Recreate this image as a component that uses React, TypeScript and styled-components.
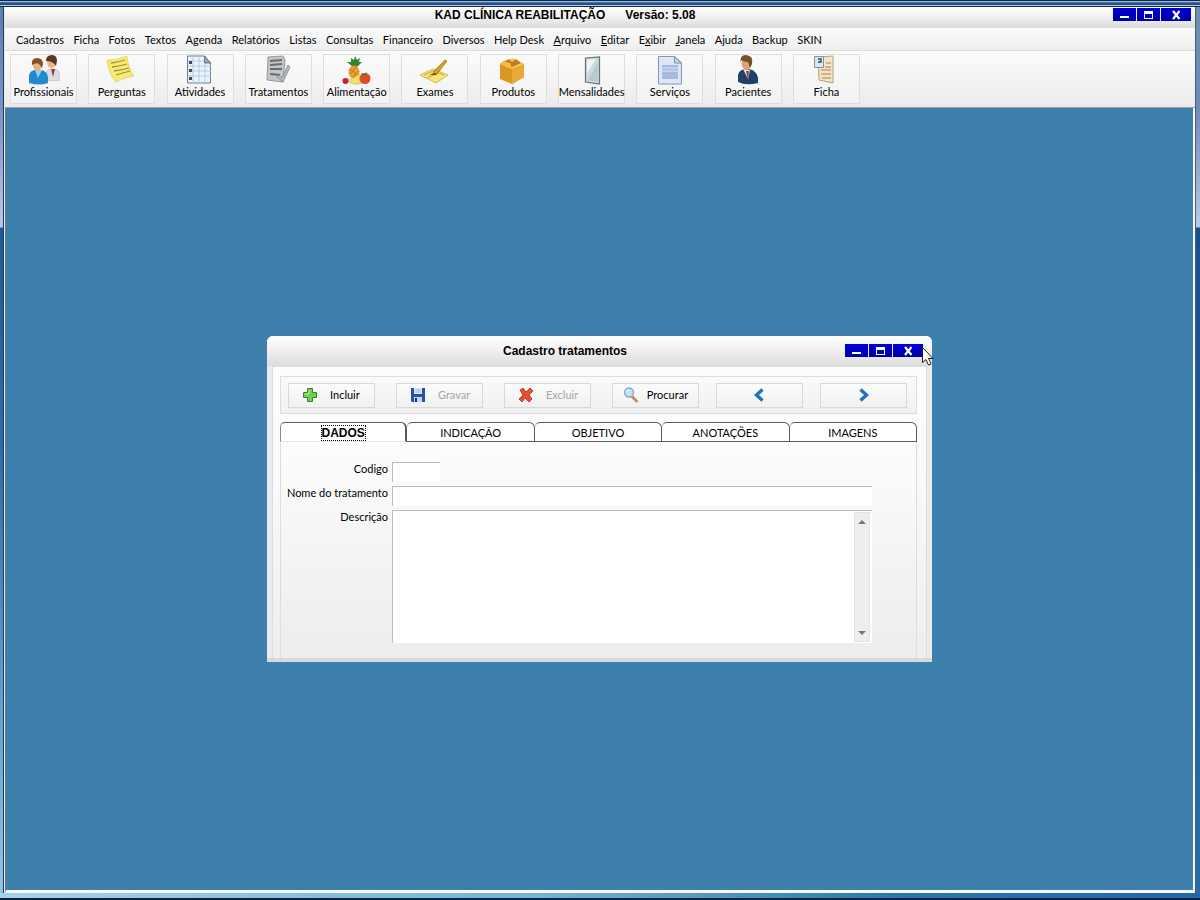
import React from 'react';
import styled, { createGlobalStyle } from 'styled-components';

const Global = createGlobalStyle`
  *, *::before, *::after { box-sizing: border-box; }
  html, body { margin: 0; height: 100%; }
  body, button, input, textarea { font-family: Lato, "Liberation Sans", sans-serif; font-size: 11px; line-height: 14px; color: #000; }
  #root { height: 100%; }
  button { padding: 0; border: 0; background: none; }
`;

const Frame = styled.div`
  display: grid;
  grid-template-columns: 5px minmax(0, 1fr) 5px;
  grid-template-rows: 7px minmax(0, 1fr) 7px;
  min-height: 100vh;
  background: #1d5b96;
`;
const EdgeTop = styled.div`
  grid-column: 1 / -1;
  background: linear-gradient(#0f2c56 0 1px, #9db7d2 1px 2px, #4a73a6 2px 3px, #224f88 3px 5px, #b5cde2 5px 6px, #10264a 6px);
`;
const EdgeBottom = styled.div`
  grid-column: 1 / -1;
  background: linear-gradient(transparent 0 5px, #0b2140 5px), linear-gradient(90deg, #a5d0ea 0, #6fb4da 45%, #2f75ad 75%, #2467a5);
`;
const EdgeLeft = styled.div`
  border-right: 1px solid #e4edf4;
  box-shadow: inset -1px 0 #1c3a62;
  background: linear-gradient(#5d7fae 0, #7f94c4 110px, #b9c8e6 220px, #1f5b94 221px, #2a6ea9 50%, #8fc4e2);
`;
const EdgeRight = styled.div`
  border-left: 1px solid #3c5f86;
  background: linear-gradient(#6f8dae 0, #6d8cb2 90px, #7b8bbd 110px, #b7cbe4 220px, #1a4f8c 221px, #1f5d9b 60%, #2b6ca8);
`;
const AppWindow = styled.div`
  display: flex;
  flex-direction: column;
  min-width: 0;
  background: #f4f4f4;
`;
const TitleBar = styled.header<{ $dialog?: boolean }>`
  display: flex;
  align-items: flex-start;
  flex: none;
  height: ${(p) => (p.$dialog ? 30 : 21)}px;
  padding: ${(p) => (p.$dialog ? '8px 9px 0 18px' : '1px 4px 0 12px')};
  background: linear-gradient(#ffffff, #f1f1f1 45%, #dcdcdc);
`;
const Title = styled.h1`
  flex: 1;
  margin: 0;
  font-family: "Liberation Sans", sans-serif;
  font-size: 12px;
  line-height: 14px;
  font-weight: 700;
  text-align: center;
  white-space: pre;
`;
const Controls = styled.div`
  display: flex;
  gap: 1px;
`;
const ControlButton = styled.button<{ $wide?: boolean }>`
  width: ${(p) => (p.$wide ? 30 : 23)}px;
  height: 13px;
  background: linear-gradient(#0000d8, #0000a8);
  svg { display: block; margin: 0 auto; }
`;
const MenuBar = styled.nav`
  flex: none;
  height: 23px;
  padding: 5px 11px 0;
  border-bottom: 1px solid #dcdcdc;
  background: linear-gradient(#fbfbfb, #eeeeee);
`;
const MenuRow = styled.div`
  display: flex;
  justify-content: space-between;
  max-width: 806px;
`;
const MenuItem = styled.button`
  white-space: nowrap;
`;
const ToolBar = styled.div`
  flex: none;
  height: 57px;
  padding: 3px 5px 0;
  border-bottom: 1px solid #a09ba8;
  background: linear-gradient(#fcfcfc, #ebebeb);
`;
const ToolRow = styled.div`
  display: flex;
  justify-content: space-between;
  max-width: 850px;
`;
const ToolButton = styled.button`
  display: flex;
  flex-direction: column;
  align-items: center;
  width: 67px;
  height: 50px;
  border: 1px solid #dedede;
  background: linear-gradient(#fafafa, #f2f2f2);
  white-space: nowrap;
  svg { flex: none; }
`;
const Workspace = styled.main`
  display: flex;
  flex: 1;
  align-items: center;
  justify-content: center;
  border: solid;
  border-width: 0 2px 3px 1px;
  border-color: #f6fafc #f6fafc #f6fafc #64788c;
  background: #3c80ab;
`;
const Dialog = styled.section`
  position: relative;
  width: 665px;
  border-bottom: 4px solid #d6dad9;
  border-radius: 6px 6px 0 0;
  background: #ececec;
`;
const DialogTitleBar = styled(TitleBar)`
  border-radius: 6px 6px 0 0;
`;
const DialogBody = styled.div`
  margin: 0 5px;
  padding: 9px 9px 0 7px;
  border: 1px solid #dddddd;
  border-bottom: 0;
  background: linear-gradient(#fcfcfc, #f9f9f9 40%, #eeeeee);
`;
const ActionBar = styled.div`
  display: flex;
  align-items: center;
  gap: 21px;
  height: 38px;
  padding: 0 7px;
  border: 1px solid #dddddd;
  background: linear-gradient(#fafafa, #f0f0f0);
`;
const NavPair = styled.div`
  display: flex;
  gap: 17px;
  margin-left: -4px;
`;
const ActionButton = styled.button<{ $layout?: 'snug' | 'icon' }>`
  display: flex;
  align-items: center;
  justify-content: ${(p) => (p.$layout ? 'center' : 'flex-start')};
  gap: ${(p) => (p.$layout ? 8 : 12)}px;
  width: 87px;
  height: 25px;
  padding: ${(p) => (p.$layout ? 0 : '0 0 0 13px')};
  border: 1px solid #d9d9d9;
  background: linear-gradient(#fbfbfb, #f1f1f1);
  svg { flex: none; }
  &:disabled { color: #a5a5a5; }
`;
const TabList = styled.div`
  display: grid;
  grid-template-columns: repeat(5, minmax(0, 1fr));
  margin-top: 8px;
`;
const Tab = styled.button`
  height: 20px;
  padding-top: 1px;
  border: 1px solid #5a5a5a;
  border-left-width: 0;
  border-radius: 5px 6px 0 0;
  background: #fff;
  &:first-child { border-left: 1px solid #8a8a8a; }
  &[aria-selected='true'] {
    border-bottom-color: #e4e4e4;
    border-right-width: 2px;
    font: 700 12px/14px "Liberation Sans", sans-serif;
  }
  &[aria-selected='true'] span { outline: 1px dotted #000; }
`;
const Panel = styled.form`
  display: grid;
  grid-template-columns: 107px minmax(0, 480px);
  gap: 4px;
  padding: 20px 0 15px;
  border: solid #dddddd;
  border-width: 0 1px;
  background: linear-gradient(#fcfcfc, #f3f3f3 60%, #ededed);
`;
const Label = styled.label`
  text-align: right;
  white-space: nowrap;
`;
const Field = styled.input<{ $short?: boolean }>`
  width: ${(p) => (p.$short ? '48px' : '100%')};
  height: 20px;
  padding: 0 3px;
  border: solid #bdbdbd;
  border-width: 1px 0 0 1px;
  border-radius: 0;
  outline: 0;
  background: #fff;
`;
const MemoBox = styled.div`
  display: flex;
  height: 133px;
  padding-right: 2px;
  border: solid #bdbdbd;
  border-width: 1px 0 0 1px;
  background: #fff;
`;
const Memo = styled.textarea`
  flex: 1;
  padding: 2px 3px;
  border: 0;
  outline: 0;
  resize: none;
  background: #fff;
  overflow: hidden;
`;
const Scroll = styled.div`
  display: flex;
  flex-direction: column;
  justify-content: space-between;
  width: 16px;
  margin: 1px 0;
  border: 1px solid #e4e4e4;
  background: #eeeeee;
  button { height: 16px; }
  svg { display: block; margin: 0 auto; }
`;
const Pointer = styled.svg`
  position: absolute;
  left: 654px;
  top: 10px;
`;

const WindowControls = () => (
  <Controls>
    <ControlButton aria-label="Minimizar">
      <svg width="23" height="13"><path d="M7 8h9v2H7z" fill="#fff" /></svg>
    </ControlButton>
    <ControlButton aria-label="Maximizar">
      <svg width="23" height="13"><path d="M7 3h9v8H7zM8 6v4h7V6z" fill="#fff" fillRule="evenodd" /></svg>
    </ControlButton>
    <ControlButton $wide aria-label="Fechar">
      <svg width="30" height="13"><path d="M12 3l6.500 8M18.500 3L12 11" stroke="#fff" strokeWidth="2.200" /></svg>
    </ControlButton>
  </Controls>
);

const art: Record<string, React.ReactNode> = {
  Profissionais: (
    <>
      <path d="M18 24v-6q1-4 5-4h4q4 1 5 6v5q-6 2-14 0z" fill="#d9dde3" stroke="#b4b9c2" strokeWidth=".6" />
      <path d="M23 14l2 8 2-8z" fill="#b5332c" />
      <ellipse cx="23.500" cy="7" rx="4.500" ry="6" fill="#e8b586" />
      <path d="M18 6q0-6 6-6 5 0 5 6l-1 5q-3-5-10-5z" fill="#5b3424" />
      <path d="M1 27v-6q0-5 6-6h6q6 1 7 7v6q-9 3-19 0z" fill="#2389cc" />
      <path d="M7 15l3 8 4-8z" fill="#8fd0ee" />
      <ellipse cx="9.500" cy="10" rx="4.500" ry="6" fill="#e9b27b" />
      <path d="M4 10Q3 3 9 3q6 0 6 6l-1 4q-2-4-5-5z" fill="#8b4f24" />
    </>
  ),
  Perguntas: (
    <>
      <path d="M1 5q11 0 20-4 1 12 7 20-9 1-18 6Q2 18 1 5z" fill="#f7ea72" stroke="#e2cf45" strokeWidth=".7" />
      <path d="M5 8q8-1 14-3M6 12q8-1 15-3M8 16q8-1 15-3M10 20q7-2 14-4" fill="none" stroke="#9c8f3f" strokeWidth="1.300" />
    </>
  ),
  Atividades: (
    <>
      <path d="M3.500 1h17l6 7v20h-23z" fill="#eaf3fb" stroke="#6f7f90" />
      <path d="M9 1v27M4 6h17M4 11h23M4 16h23M4 21h23M15 1v27M21 8v20" stroke="#b0c8dc" strokeWidth=".9" />
      <path d="M20.500 1v7h6z" fill="#98a7b5" stroke="#59636e" strokeWidth=".8" />
      <path d="M5 6h3v3H5zM5 14h3v3H5zM5 22h3v3H5z" fill="#3e4956" />
    </>
  ),
  Tratamentos: (
    <>
      <path d="M6 2l15-1 2 4-2 22-16-2z" fill="#c3c6c8" stroke="#97999c" />
      <path d="M8 6l12-1M8 10l12-1M8 14h12M8 19l10 1" stroke="#686b6f" strokeWidth="2" />
      <path d="M15 22l2-2 3 3 6-13 2 2-7 15z" fill="#b5b9bd" stroke="#85898e" strokeWidth=".8" />
    </>
  ),
  Alimentação: (
    <>
      <path d="M12 12L6 7l4 0V3l3 2 1-4 2 4 3-2-1 4 3 0-5 5z" fill="#348335" />
      <ellipse cx="13" cy="17" rx="5.500" ry="6.500" fill="#ed9c2c" />
      <path d="M9 14l8 6M9 19l6-7M12 22l6-6" stroke="#bd671c" strokeWidth=".7" />
      <path d="M4 25q8 0 14-6 4 5 3 9-7 3-12-1z" fill="#f2df6b" stroke="#c7a83a" strokeWidth=".6" />
      <circle cx="4.500" cy="26" r="3" fill="#bb2245" />
      <circle cx="24" cy="23.500" r="5.500" fill="#dc4d28" />
      <path d="M20 18l3 1 3-2-1 3-3 1z" fill="#49752d" />
    </>
  ),
  Exames: (
    <>
      <path d="M1 20l13-6 15 6-12 8z" fill="#f5e47b" stroke="#d6bd47" />
      <path d="M5 20l9-4 11 4M8 23l9-4" fill="none" stroke="#c8a937" />
      <path d="M14 19l1-3L26 5l2 1-10 13z" fill="#d89d25" stroke="#9c741e" strokeWidth=".7" />
      <path d="M10 20l6-2 2 2z" fill="#6c5529" />
    </>
  ),
  Produtos: (
    <>
      <path d="M3 9l13-5 11 5v13L15 29 3 24z" fill="#dc9525" />
      <path d="M3 9l12 5 12-5-11-6z" fill="#f6c75b" />
      <path d="M15 14l12-5v13l-12 7z" fill="#e9a937" />
      <path d="M6 7l6-3 3 3 4-3 5 4-9 4z" fill="#c27c20" />
      <path d="M3 9l3-3 7 2 2 6z" fill="#f3bb4a" />
    </>
  ),
  Mensalidades: (
    <>
      <path d="M9.500 3l14-1v27l-14-2z" fill="#ccdade" stroke="#687176" strokeWidth="1.200" />
      <path d="M11 5l9-1-9 14z" fill="#f0f6f7" />
      <path d="M22 7v20l-10-2z" fill="#b5cad1" />
    </>
  ),
  Serviços: (
    <>
      <path d="M4.500 1.500h16l7 6.500v21h-23z" fill="#dde6f6" stroke="#8495ba" />
      <path d="M20.500 1.500V8h7z" fill="#c5d1e6" stroke="#6b7ba0" strokeWidth=".8" />
      <path d="M8 10h16v14H8z" fill="#a7bade" />
      <path d="M8 13h16M8 16h16M8 26h16M8 7h10" stroke="#dfe7f5" />
    </>
  ),
  Pacientes: (
    <>
      <path d="M6 27v-7q1-5 7-6h4q8 2 9 9v5q-12 3-20-1z" fill="#203f69" />
      <path d="M11 14l5 10 2-9z" fill="#dce9f3" />
      <path d="M14 16l2 9 1-9z" fill="#b33131" />
      <ellipse cx="14.500" cy="8" rx="5" ry="7" fill="#dca777" />
      <path d="M9 8Q7 0 14 0q8 1 6 9l-2 4-2-6q-4 0-7-2z" fill="#76502b" />
    </>
  ),
  Ficha: (
    <>
      <path d="M8 2l15-1v27l-14-3z" fill="#f1e5c7" stroke="#b6a37b" />
      <path d="M4.500 1.500h9v11h-9z" fill="#dce8ef" stroke="#7996aa" />
      <path d="M8 4h3v3H8" fill="none" stroke="#2b4d68" strokeWidth="1.500" />
      <path d="M16 8h5M15 12h6M11 15h10M11 19h10M12 23h9" stroke="#b08246" strokeWidth="1.200" />
    </>
  ),
};

const tools = Object.keys(art);

const menu: [string, number?][] = [
  ['Cadastros'], ['Ficha'], ['Fotos'], ['Textos'], ['Agenda'], ['Relatórios'], ['Listas'], ['Consultas'],
  ['Financeiro'], ['Diversos'], ['Help Desk'], ['Arquivo', 0], ['Editar', 0], ['Exibir', 1], ['Janela', 0],
  ['Ajuda'], ['Backup'], ['SKIN'],
];

const menuLabel = (text: string, at?: number) =>
  at === undefined ? text : <>{text.slice(0, at)}<u>{text[at]}</u>{text.slice(at + 1)}</>;

const PlusIcon = () => (
  <svg width="16" height="16"><path d="M5.500 1.500h5v4h4v5h-4v4h-5v-4h-4v-5h4z" fill="#6fcf4b" stroke="#35872a" /><path d="M7 3v4H3" fill="none" stroke="#b9f09a" /></svg>
);
const SaveIcon = () => (
  <svg width="16" height="16"><path d="M1 1h14v14H2l-1-1z" fill="#2754a4" /><path d="M4 1h8v6H4z" fill="#dfeaf8" /><path d="M4 10h8v5H4z" fill="#c7d6ee" /><path d="M5 11h2v4H5z" fill="#163878" /><path d="M5 3h6M5 5h6" stroke="#9bb5dc" /></svg>
);
const DeleteIcon = () => (
  <svg width="16" height="16"><path d="M2 3l3-2 3 4 4-4 3 3-4 4 3 4-3 3-4-4-3 4-3-3 4-4z" fill="#e5502f" stroke="#ae2c18" strokeWidth=".8" /></svg>
);
const SearchIcon = () => (
  <svg width="16" height="16"><path d="M8.500 9l5 5" stroke="#c98d62" strokeWidth="3" strokeLinecap="round" /><circle cx="6" cy="5.500" r="4.500" fill="#bfe3f4" stroke="#84a9bf" strokeWidth="1.300" /><path d="M3.500 5q.5-2 2.500-2" fill="none" stroke="#fff" /></svg>
);
const Chevron = ({ next }: { next?: boolean }) => (
  <svg width="14" height="16"><path d={next ? 'M3.500 2.500l6 5.500-6 5.500' : 'M9.500 2.500L3.500 8l6 5.500'} fill="none" stroke="#2173c2" strokeWidth="3.400" /></svg>
);

const tabs = ['DADOS', 'INDICAÇÃO', 'OBJETIVO', 'ANOTAÇÕES', 'IMAGENS'];

export default function App() {
  return (
    <>
      <Global />
      <Frame>
        <EdgeTop />
        <EdgeLeft />
        <AppWindow>
          <TitleBar>
            <Title>{'KAD CLÍNICA REABILITAÇÃO      Versão: 5.08'}</Title>
            <WindowControls />
          </TitleBar>
          <MenuBar>
            <MenuRow>
              {menu.map(([text, key]) => (
                <MenuItem key={text}>{menuLabel(text, key)}</MenuItem>
              ))}
            </MenuRow>
          </MenuBar>
          <ToolBar>
            <ToolRow>
              {tools.map((name) => (
                <ToolButton key={name}>
                  <svg width="32" height="30">{art[name]}</svg>
                  {name}
                </ToolButton>
              ))}
            </ToolRow>
          </ToolBar>
          <Workspace>
            <Dialog role="dialog" aria-labelledby="dialog-title">
              <DialogTitleBar $dialog>
                <Title as="h2" id="dialog-title">Cadastro tratamentos</Title>
                <WindowControls />
              </DialogTitleBar>
              <DialogBody>
                <ActionBar>
                  <ActionButton><PlusIcon />Incluir</ActionButton>
                  <ActionButton disabled><SaveIcon />Gravar</ActionButton>
                  <ActionButton disabled><DeleteIcon />Excluir</ActionButton>
                  <ActionButton $layout="snug"><SearchIcon />Procurar</ActionButton>
                  <NavPair>
                    <ActionButton $layout="icon" aria-label="Anterior"><Chevron /></ActionButton>
                    <ActionButton $layout="icon" aria-label="Próximo"><Chevron next /></ActionButton>
                  </NavPair>
                </ActionBar>
                <TabList role="tablist">
                  {tabs.map((tab, i) => (
                    <Tab key={tab} role="tab" aria-selected={i === 0}><span>{tab}</span></Tab>
                  ))}
                </TabList>
                <Panel>
                  <Label htmlFor="codigo">Codigo</Label>
                  <Field id="codigo" $short />
                  <Label htmlFor="nome">Nome do tratamento</Label>
                  <Field id="nome" />
                  <Label htmlFor="descricao">Descrição</Label>
                  <MemoBox>
                    <Memo id="descricao" />
                    <Scroll>
                      <button type="button" aria-label="Rolar para cima"><svg width="8" height="5"><path d="M0 5l4-4 4 4z" fill="#777" /></svg></button>
                      <button type="button" aria-label="Rolar para baixo"><svg width="8" height="5"><path d="M0 0l4 4 4-4z" fill="#777" /></svg></button>
                    </Scroll>
                  </MemoBox>
                </Panel>
              </DialogBody>
              <Pointer width="14" height="21" aria-hidden="true">
                <path d="M1.500 1.500v15l3.500-3 2.500 5.500 2.500-1.200-2.500-5.300H12z" fill="#fff" stroke="#222" />
              </Pointer>
            </Dialog>
          </Workspace>
        </AppWindow>
        <EdgeRight />
        <EdgeBottom />
      </Frame>
    </>
  );
}
